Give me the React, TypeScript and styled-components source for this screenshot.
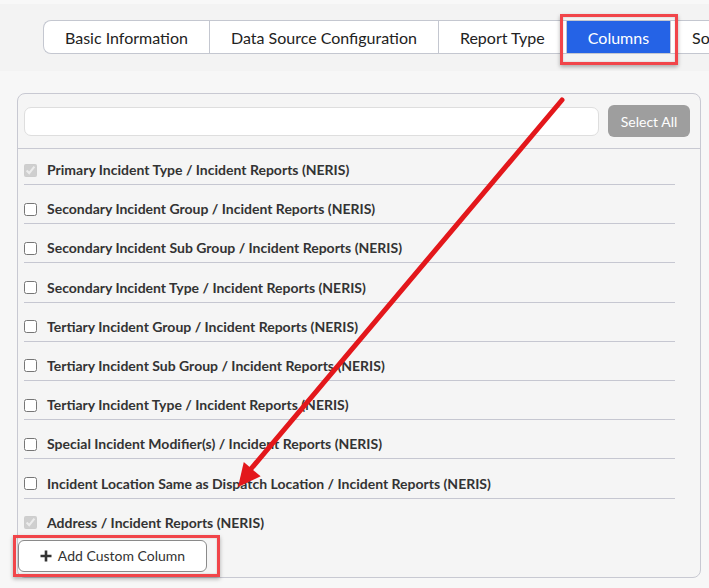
import styled, { createGlobalStyle, css } from 'styled-components';

const columns = [
  { label: 'Primary Incident Type / Incident Reports (NERIS)', locked: true },
  { label: 'Secondary Incident Group / Incident Reports (NERIS)' },
  { label: 'Secondary Incident Sub Group / Incident Reports (NERIS)' },
  { label: 'Secondary Incident Type / Incident Reports (NERIS)' },
  { label: 'Tertiary Incident Group / Incident Reports (NERIS)' },
  { label: 'Tertiary Incident Sub Group / Incident Reports (NERIS)' },
  { label: 'Tertiary Incident Type / Incident Reports (NERIS)' },
  { label: 'Special Incident Modifier(s) / Incident Reports (NERIS)' },
  { label: 'Incident Location Same as Dispatch Location / Incident Reports (NERIS)' },
  { label: 'Address / Incident Reports (NERIS)', locked: true },
];

const tabs = ['Basic Information', 'Data Source Configuration', 'Report Type', 'Columns', 'Sorting'];

function App() {
  return (
    <Page>
      <GlobalStyle />
      <TopBar>
        <Tabs>
          {tabs.map(t => (
            <Tab key={t} $active={t === 'Columns'}>
              {t}
            </Tab>
          ))}
        </Tabs>
      </TopBar>

      <Panel>
        <PanelHeader>
          <SearchInput type="text" />
          <SelectAllButton>Select All</SelectAllButton>
        </PanelHeader>
        <List>
          {columns.map(c => (
            <Row key={c.label}>
              <Check type="checkbox" defaultChecked={!!c.locked} disabled={!!c.locked} />
              <RowLabel>{c.label}</RowLabel>
            </Row>
          ))}
        </List>
        <Footer>
          <AddButton>
            <svg width="12" height="12" viewBox="0 0 12 12">
              <path d="M6 0.5v11M0.5 6h11" stroke="#333" strokeWidth="2.6" />
            </svg>
            Add Custom Column
          </AddButton>
        </Footer>
      </Panel>

      {/* annotation arrow drawn over the screenshot */}
      <Arrow width="709" height="588" viewBox="0 0 709 588">
        <line x1="562" y1="100" x2="250" y2="470" stroke="#e3171b" strokeWidth="5" strokeLinecap="round" />
        <polygon points="238,487 260.6,476.3 243.8,462.1" fill="#e3171b" />
      </Arrow>
    </Page>
  );
}

const GlobalStyle = createGlobalStyle`
  html, body {
    margin: 0;
    padding: 0;
    background: #f7f7f7;
    font-family: Lato, "Open Sans", Arial, sans-serif;
  }
`;

const Page = styled.div`
  position: relative;
  width: 709px;
  height: 588px;
  overflow: hidden;
  background: #f7f7f7;
`;

const TopBar = styled.div`
  height: 71px;
  box-sizing: border-box;
  padding: 16px 0 0 43px;
  background: #f3f3f3;
  border-top: 4px solid #f8f8f8;
  display: flex;
  overflow: hidden;
`;

const Tabs = styled.div`
  display: flex;
  height: 34px;
  flex-shrink: 0;
  background: #fff;
  border: 1px solid #c4c7d0;
  border-right: none;
  border-radius: 8px 0 0 8px;
  box-sizing: border-box;
`;

const redBox = css`
  &::after {
    content: '';
    position: absolute;
    border: 3px solid #f1454a;
    box-shadow: 0 2px 4px rgba(0, 0, 0, 0.3), inset 0 0 2px rgba(0, 0, 0, 0.2);
    pointer-events: none;
  }
`;

const Tab = styled.div<{ $active?: boolean }>`
  position: relative;
  display: flex;
  align-items: center;
  padding: 0 21px;
  font-size: 16px;
  color: #222;
  white-space: nowrap;
  & + & {
    border-left: 1px solid #c4c7d0;
  }
  ${p =>
    p.$active &&
    css`
      background: #2563e6;
      color: #fff;
      border-left: none;
      & + div {
        border-left: none;
      }
      ${redBox}
      &::after {
        left: -7px;
        right: -8px;
        top: -7px;
        bottom: -12px;
      }
    `}
`;

const Panel = styled.div`
  margin: 22px 8px 0 17px;
  border: 1px solid #c8c9d2;
  border-radius: 8px;
  background: #f5f5f5;
  height: 485px;
  box-sizing: border-box;
`;

const PanelHeader = styled.div`
  display: flex;
  align-items: center;
  gap: 9px;
  padding: 11px 10px 11px 6px;
  border-bottom: 1px solid #c8c9d2;
`;

const SearchInput = styled.input`
  flex: 1;
  height: 29px;
  box-sizing: border-box;
  border: 1px solid #dedede;
  border-radius: 7px;
  background: #fff;
  outline: none;
`;

const SelectAllButton = styled.button`
  width: 82px;
  height: 32px;
  border: none;
  border-radius: 6px;
  background: #9e9e9e;
  color: #fff;
  font-family: inherit;
  font-size: 14px;
`;

const List = styled.div`
  padding: 0 25px 0 6px;
`;

const Row = styled.label`
  display: flex;
  align-items: center;
  gap: 10px;
  padding: 14.2px 0 4px;
  line-height: 20px;
  border-bottom: 1px solid #c6c7d1;
  &:first-child {
    padding-top: 11px;
  }
  &:last-child {
    border-bottom: none;
    padding-bottom: 0;
  }
`;

const Check = styled.input`
  width: 13px;
  height: 13px;
  margin: 0;
`;

const RowLabel = styled.span`
  font-size: 14px;
  font-weight: 700;
  color: #333;
  white-space: nowrap;
`;

const Footer = styled.div`
  padding: 7px 0 0 0;
`;

const AddButton = styled.button`
  position: relative;
  display: flex;
  align-items: center;
  justify-content: center;
  gap: 6px;
  width: 189px;
  height: 32px;
  box-sizing: border-box;
  background: #fff;
  border: 1px solid #8a8a8a;
  border-radius: 6px;
  font-family: inherit;
  font-size: 14px;
  color: #333;
  ${redBox}
  &::after {
    left: -6px;
    right: -14px;
    top: -6px;
    bottom: -6px;
  }
`;

const Arrow = styled.svg`
  position: absolute;
  left: 0;
  top: 0;
  pointer-events: none;
`;

export default App;
